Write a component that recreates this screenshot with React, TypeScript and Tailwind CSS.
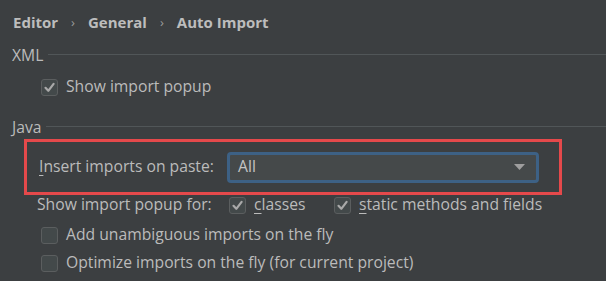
import React from "react";

const Check = ({ checked }: { checked: boolean }) => (
  <span className="w-[17px] h-[17px] rounded-[3px] border border-[#5b5e5f] bg-[#43494a] flex items-center justify-center shrink-0">
    {checked && (
      <svg width="13" height="13" viewBox="0 0 13 13">
        <path d="M2.5 6.8 L5.3 9.8 L10.6 2.8" fill="none" stroke="#a9a9a9" strokeWidth="2.2" strokeLinecap="round" strokeLinejoin="round" />
      </svg>
    )}
  </span>
);

const Section = ({ title }: { title: string }) => (
  <div className="flex items-center h-[22px] pl-[12px]">
    <span>{title}</span>
    <div className="flex-1 h-px bg-[#515658] ml-[5px] mt-[-4px]" />
  </div>
);

export default function App() {
  return (
    <div className="w-[606px] h-[281px] bg-[#3c3f41] text-[#bbbbbb] text-[15.7px] leading-none overflow-hidden" style={{ fontFamily: '"Open Sans", "Noto Sans", sans-serif' }}>
      <div className="h-[36px] pl-[13px] pt-[8px] flex items-center font-bold text-[15px] text-[#bdbdbd]">
        <span>Editor</span>
        <span className="mx-[13px] font-normal text-[13px] text-[#9a9a9a]">›</span>
        <span>General</span>
        <span className="mx-[13px] font-normal text-[13px] text-[#9a9a9a]">›</span>
        <span>Auto Import</span>
      </div>
      <div className="mt-[9px]">
        <Section title="XML" />
      </div>
      <div className="flex items-center gap-[8px] pl-[41px] mt-[10px] h-[20px]">
        <Check checked />
        <span>Show import popup</span>
      </div>
      <div className="mt-[20px]">
        <Section title="Java" />
      </div>
      <div className="ml-[24px] w-[538px] h-[56px] border-[3px] border-[#e5494b] flex items-center pl-[12px] pr-[20px]">
        <span className="w-[188px]"><span className="underline underline-offset-[3px]">I</span>nsert imports on paste:</span>
        <div className="flex-1 h-[31px] rounded-[4px] border-[3px] border-[#3d6185] bg-[#45494a] flex items-center pl-[8px] pr-[11px] justify-between">
          <span className="text-[#c4c4c4]">All</span>
          <svg width="11" height="6" viewBox="0 0 11 6"><path d="M0 0 H11 L5.5 6 Z" fill="#9e9e9e" /></svg>
        </div>
      </div>
      <div className="flex items-center h-[20px] pl-[37px]">
        <span className="w-[192px]">Show import popup for:</span>
        <Check checked />
        <span className="ml-[8px] w-[80px]"><span className="underline underline-offset-[3px]">c</span>lasses</span>
        <Check checked />
        <span className="ml-[8px]"><span className="underline underline-offset-[3px]">s</span>tatic methods and fields</span>
      </div>
      <div className="flex items-center gap-[8px] pl-[41px] mt-[9px] h-[22px]">
        <Check checked={false} />
        <span>Add unambiguous imports on the fly</span>
      </div>
      <div className="flex items-center gap-[8px] pl-[41px] mt-[6px] h-[22px]">
        <Check checked={false} />
        <span>Optimize imports on the fly (for current project)</span>
      </div>
    </div>
  );
}
